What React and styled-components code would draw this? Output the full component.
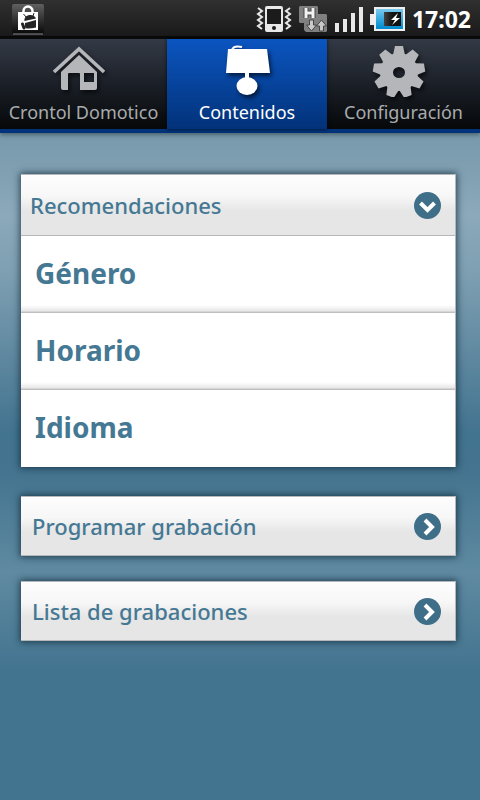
import React, { useState } from "react";
import styled, { createGlobalStyle } from "styled-components";

const GlobalStyle = createGlobalStyle`
  *, *::before, *::after { box-sizing: border-box; }
  body {
    margin: 0;
    background: #427390;
    font-family: "Noto Sans", sans-serif;
  }
  button { font: inherit; border: 0; margin: 0; cursor: pointer; }
`;

const Screen = styled.div`
  min-height: 100vh;
  display: flex;
  flex-direction: column;
`;

const StatusBar = styled.header`
  display: flex;
  align-items: center;
  justify-content: space-between;
  height: 38px;
  padding: 0 9px 0 12px;
  background: linear-gradient(#303030, #1a1a1a 94%, #0a0a0a 96%);
`;

const StatusIcons = styled.div`
  display: flex;
  align-items: center;
  gap: 6px;
`;

const Clock = styled.time`
  color: #fff;
  font-size: 23px;
  line-height: 36px;
  font-weight: 700;
`;

const Tabs = styled.nav`
  display: grid;
  grid-template-columns: 167fr 160fr 153fr;
  height: 95px;
  padding-top: 1px;
  background: #0a0b0d;
  border-bottom: 4px solid #023279;
  box-shadow: 0 2px 4px rgba(0, 0, 0, 0.35);
  z-index: 1;
`;

const Tab = styled.button`
  display: flex;
  flex-direction: column;
  align-items: center;
  padding: 4px 0 0;
  min-width: 0;
  white-space: nowrap;
  font-size: 18px;
  line-height: 24px;
  color: ${(p) => (p.$active ? "#fff" : "#a9abad")};
  background: ${(p) =>
    p.$active
      ? "linear-gradient(#0b55c0, #023279)"
      : "linear-gradient(#343a45, #1b2028 50%, #060809)"};
  box-shadow: ${(p) => (p.$active ? "0 0 4px rgba(0, 0, 0, 0.7)" : "none")};
  z-index: ${(p) => (p.$active ? 1 : 0)};

  svg {
    display: block;
    margin-bottom: 3px;
    margin-right: ${(p) => (p.$iconInset ? 10 : 0)}px;
    filter: drop-shadow(2px 3px 2px rgba(0, 0, 0, 0.6));
  }
`;

const Content = styled.main`
  flex: 1;
  padding: 41px 24px 41px 21px;
  background: linear-gradient(
    #7799ab 0,
    #8ba9bb 82px,
    #7e9fb2 140px,
    #42738f 300px,
    #44748f 340px,
    #5f8aa1 440px,
    #42738f 540px
  );
`;

const Panel = styled.section`
  background: #fff;
  margin-bottom: ${(p) => (p.$open ? 29 : 25)}px;
  box-shadow: 0 0 7px 1px rgba(10, 35, 50, 0.75);
`;

const PanelHeader = styled.button`
  display: flex;
  align-items: center;
  justify-content: space-between;
  width: 100%;
  height: ${(p) => (p.$open ? 62 : 60)}px;
  padding: 0 14px 0 ${(p) => p.$inset}px;
  border: solid #b4b8ba;
  border-width: 1px 1px 1px 0;
  background: linear-gradient(#fdfdfd, #f7f7f7 35%, #e6e6e6 60%, #e6e6e6);
  color: #457893;
  font-size: 22px;
  line-height: 32px;
  font-weight: 500;
  text-align: left;
`;

const Options = styled.ul`
  list-style: none;
  margin: 0;
  padding: 0;
`;

const Option = styled.li`
  border-right: 1px solid #b4b8ba;
  &:not(:last-child) button {
    background: linear-gradient(#fff 90%, #e8e8e8 97%, #b4b4b4);
  }
`;

const OptionButton = styled.button`
  display: block;
  width: 100%;
  height: 77px;
  padding: 0 14px 3px;
  background: #fff;
  color: #457893;
  font-size: 28px;
  line-height: 40px;
  font-weight: 700;
  text-align: left;
`;

const BagIcon = () => (
  <svg width="32" height="32" viewBox="0 0 32 32" aria-hidden="true">
    <defs>
      <linearGradient id="bagTile" x2="0" y2="1">
        <stop stopColor="#606060" />
        <stop offset="1" stopColor="#080808" />
      </linearGradient>
    </defs>
    <rect y="1" width="32" height="30" rx="2" fill="url(#bagTile)" />
    <path d="M1 31h30" stroke="#888" />
    <path d="M11.5 11V8a4.5 4.5 0 0 1 9 0v3" fill="none" stroke="#fff" strokeWidth="2.5" />
    <path d="M6 9h20v18H6z" fill="#fff" />
    <path d="M12.5 18c-.5-3 1.500-5.500 5-6 3-.4 5.500 1 6.500 3.500zM13 20l11-3v7.500q-4 1-8 1-3 0-3-2z" fill="#252525" />
    <path d="M10.500 21l1.500 4" stroke="#252525" strokeWidth="3" strokeLinecap="round" />
    <path d="M14 14l-2.500-3M21 13l1-3" stroke="#252525" />
  </svg>
);

const VibrateIcon = () => (
  <svg width="36" height="28" viewBox="0 0 36 28" aria-hidden="true">
    <path
      d="M2 3l4 3-4 3 4 3-4 3 4 3-4 3 4 3M34 3l-4 3 4 3-4 3 4 3-4 3 4 3-4 3"
      fill="none" stroke="#e8e8e8" strokeWidth="2"
    />
    <rect x="9" y="1" width="18" height="26" rx="2" fill="#e8e8e8" />
    <path d="M11 4h14v15H11z" fill="#1b1b1b" />
    <circle cx="18" cy="23" r="2" fill="#1b1b1b" />
  </svg>
);

const DataIcon = () => (
  <svg width="30" height="28" viewBox="0 0 30 28" aria-hidden="true">
    <path d="M1 2l1-1h17l1 1v7h8l1 1v16l-1 1H8l-2-2v-7H2l-1-1z" fill="#808080" />
    <path d="M8 3v10M15 3v10M8 8h7" stroke="#444" strokeWidth="5" />
    <path d="M8 3v10M15 3v10M8 8h7" stroke="#f2f2f2" strokeWidth="3" />
    <path d="M11.5 15h4v5h3l-5 6-5-6h3zM21.500 26v-5h-3l5-6 5 6h-3v5z" fill="#c9c9c9" stroke="#444" />
  </svg>
);

const SignalIcon = () => (
  <svg width="30" height="28" viewBox="0 0 30 28" aria-hidden="true">
    <path d="M1 18h4v9H1zM9 14h4v13H9zM17 8h4v19h-4zM25 2h4v25h-4z" fill="#e8e8e8" />
  </svg>
);

const BatteryIcon = () => (
  <svg width="36" height="26" viewBox="0 0 36 26" aria-hidden="true">
    <defs>
      <linearGradient id="charge" x2="0" y2="1">
        <stop stopColor="#7cc9ee" />
        <stop offset=".5" stopColor="#36a9df" />
        <stop offset="1" stopColor="#0089ce" />
      </linearGradient>
      <linearGradient id="charger" x2="1" y2="0">
        <stop stopColor="#444" />
        <stop offset=".5" stopColor="#111" />
      </linearGradient>
    </defs>
    <path d="M4 1h31v24H4v-6H0V8h4z" fill="#eee" />
    <path d="M6 3h27v20H6z" fill="url(#charge)" />
    <path d="M14 6h17v14H14z" fill="url(#charger)" />
    <path d="M28 7l-7 7h4l-3 5 8-7h-4z" fill="#fff" />
  </svg>
);

const HouseIcon = () => (
  <svg width="52" height="54" viewBox="0 0 52 54" aria-hidden="true">
    <path d="M1 29L26 6l25 23" fill="none" stroke="#b5b6b9" strokeWidth="3.500" />
    <path
      fillRule="evenodd" fill="#b5b6b9"
      d="M26 12l18 17v16q0 2-2 2H27V31q0-1-1-1H16q-1 0-1 1v16h-5q-2 0-2-2V29zM31 30v9h10v-9z"
    />
  </svg>
);

const LampIcon = () => (
  <svg width="46" height="54" viewBox="0 0 46 54" aria-hidden="true">
    <path d="M8 7c1-4 5-4 10-3" fill="none" stroke="#fff" strokeWidth="2" />
    <path d="M4 6h39l3 24H25v6h-4v-6H2z" fill="#fff" />
    <ellipse cx="23" cy="43" rx="10.500" ry="9" fill="#fff" />
  </svg>
);

const TEETH = [0, 40, 80, 120, 160, 200, 240, 280, 320];

const GearIcon = () => (
  <svg width="54" height="54" viewBox="0 0 54 54" aria-hidden="true">
    <g fill="#b5b6b9">
      {TEETH.map((angle) => (
        <path key={angle} d="M21 12l2-9h8l2 9z" transform={`rotate(${angle} 27 29)`} />
      ))}
      <path
        fillRule="evenodd"
        d="M27 10a19 19 0 1 0 0 38a19 19 0 1 0 0-38zM27 24a6 5.500 0 1 1 0 11a6 5.500 0 1 1 0-11z"
      />
    </g>
  </svg>
);

const Chevron = ({ open }) => (
  <svg width="27" height="27" viewBox="0 0 27 27" aria-hidden="true">
    <circle cx="13.5" cy="13.5" r="13.5" fill="#3f6e89" />
    <path
      d={open ? "M6.5 11l7 7 7-7" : "M11 7l7 7-7 7"}
      fill="none" stroke="#fff" strokeWidth="4"
    />
  </svg>
);

const TABS = [
  { label: "Crontol Domotico", Icon: HouseIcon, iconInset: true },
  { label: "Contenidos", Icon: LampIcon, iconInset: false },
  { label: "Configuración", Icon: GearIcon, iconInset: true },
];

const SECTIONS = [
  { title: "Recomendaciones", inset: 9, options: ["Género", "Horario", "Idioma"] },
  { title: "Programar grabación", inset: 11, options: [] },
  { title: "Lista de grabaciones", inset: 11, options: [] },
];

export default function App() {
  const [tab, setTab] = useState(1);
  const [openSection, setOpenSection] = useState(0);

  return (
    <Screen>
      <GlobalStyle />
      <StatusBar>
        <BagIcon />
        <StatusIcons>
          <VibrateIcon />
          <DataIcon />
          <SignalIcon />
          <BatteryIcon />
          <Clock>17:02</Clock>
        </StatusIcons>
      </StatusBar>
      <Tabs>
        {TABS.map(({ label, Icon, iconInset }, i) => (
          <Tab
            key={label}
            type="button"
            $active={i === tab}
            $iconInset={iconInset}
            aria-current={i === tab ? "page" : undefined}
            onClick={() => setTab(i)}
          >
            <Icon />
            {label}
          </Tab>
        ))}
      </Tabs>
      <Content>
        {SECTIONS.map(({ title, inset, options }, i) => {
          const open = i === openSection;
          return (
            <Panel key={title} $open={open}>
              <PanelHeader
                type="button"
                $open={open}
                $inset={inset}
                aria-expanded={open}
                onClick={() => setOpenSection(open ? -1 : i)}
              >
                {title}
                <Chevron open={open} />
              </PanelHeader>
              {open && options.length > 0 && (
                <Options>
                  {options.map((name) => (
                    <Option key={name}>
                      <OptionButton type="button">{name}</OptionButton>
                    </Option>
                  ))}
                </Options>
              )}
            </Panel>
          );
        })}
      </Content>
    </Screen>
  );
}
